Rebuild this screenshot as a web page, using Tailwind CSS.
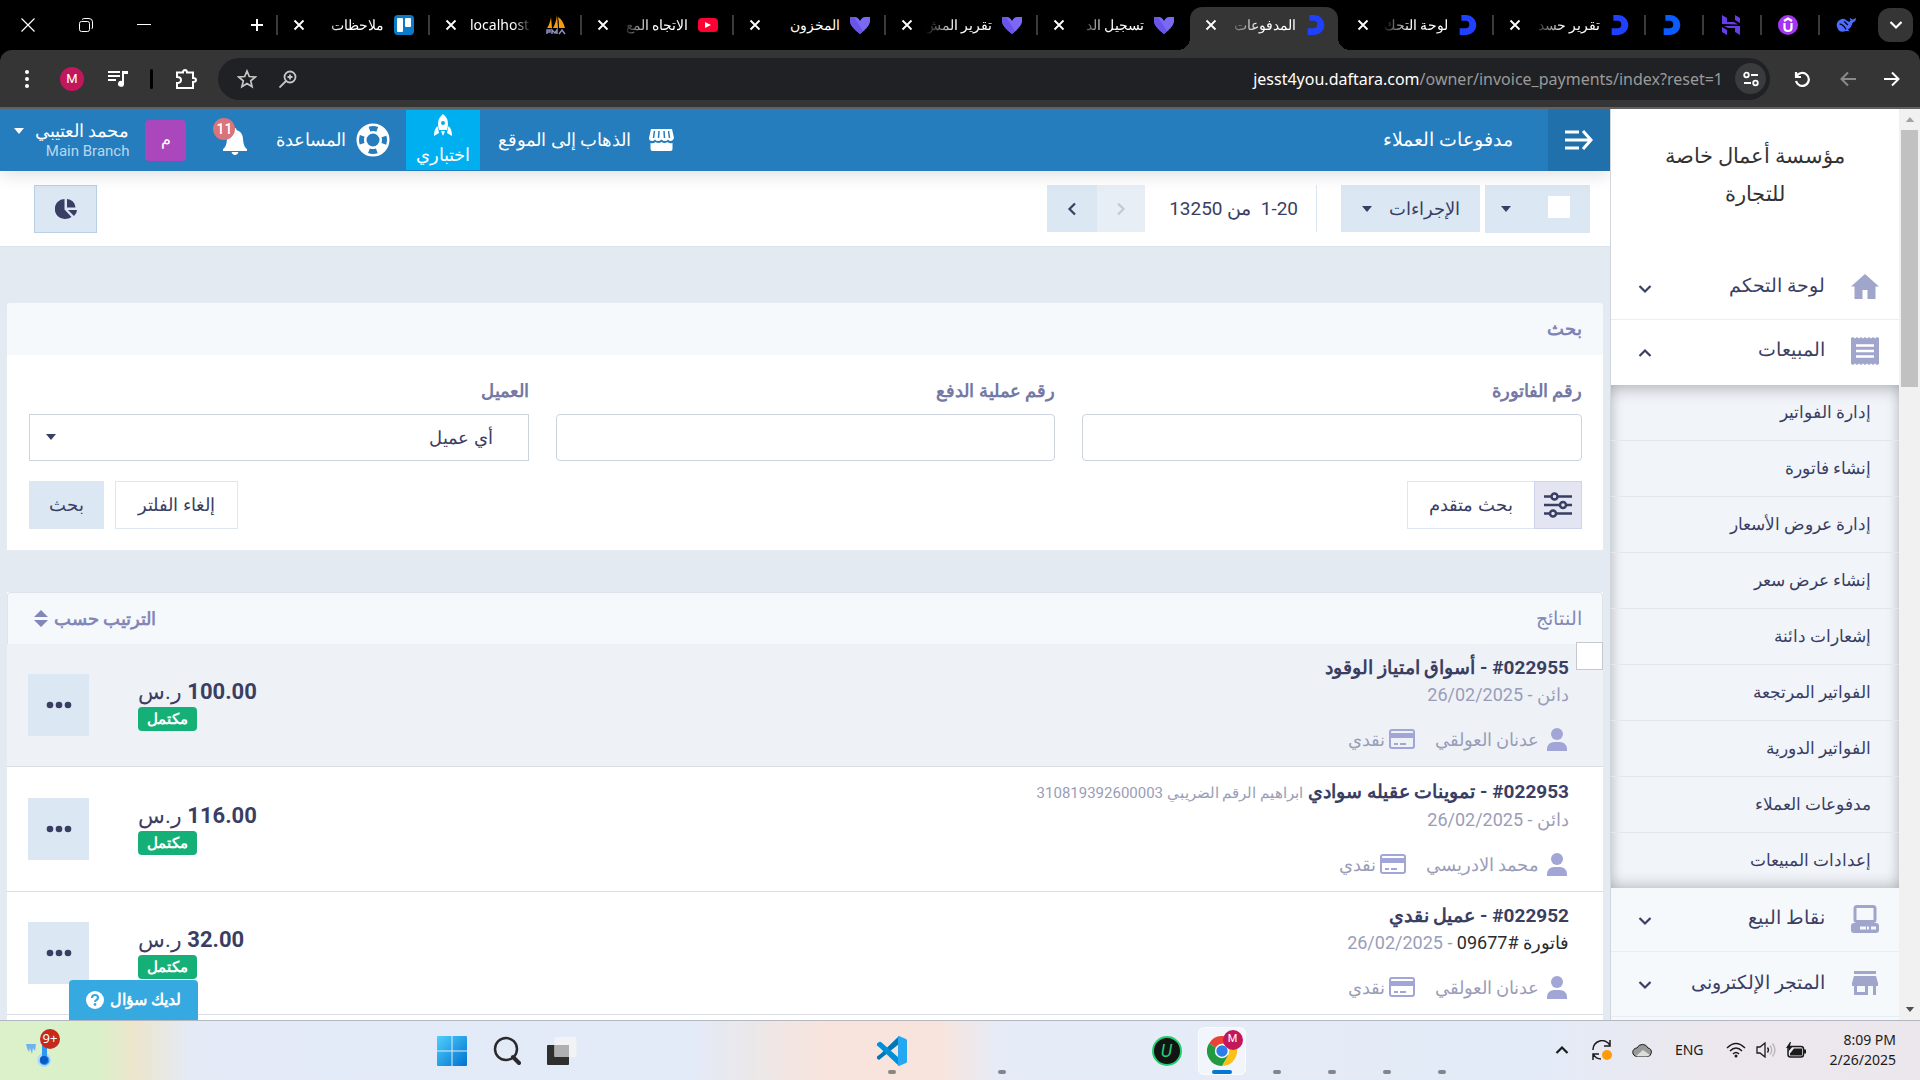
<!DOCTYPE html>
<html lang="ar" dir="rtl">
<head>
<meta charset="utf-8">
<meta name="viewport" content="width=device-width, initial-scale=1">
<title>مدفوعات العملاء</title>
<script src="https://cdn.jsdelivr.net/npm/@tailwindcss/browser@4"></script>
</head>
<body class="flex h-screen flex-col overflow-hidden bg-[#e3eaf2] font-[Roboto,'Noto_Sans',sans-serif] text-[#3a3e63]">

<!-- Shared icon shapes -->
<svg class="hidden" aria-hidden="true">
  <symbol id="x" viewBox="0 0 12 12"><path d="M1.5 1.5l9 9M10.5 1.5l-9 9" stroke="currentColor" stroke-width="1.8" fill="none"/></symbol>
  <symbol id="heart" viewBox="0 0 20 18"><path d="M0 1h5q3 0 5 4 2-4 5-4h5v5q-1 5-10 12Q1 11 0 6z" fill="#7b68f4"/><path d="M0 6Q1 11 10 18l3-3L4 1H0z" fill="#6a55ea"/></symbol>
  <symbol id="daf" viewBox="0 0 20 24"><path d="M2 0h6a12 12 0 0 1 0 24H0v-8h7a4.500 4.500 0 0 0 0-9H2z" fill="currentColor"/></symbol>
  <symbol id="caret" viewBox="0 0 10 6"><path d="M0 0h10L5 6z" fill="currentColor"/></symbol>
  <symbol id="chev" viewBox="0 0 14 10"><path d="M1.500 2L7 7.500 12.500 2" stroke="currentColor" stroke-width="2.200" fill="none"/></symbol>
  <symbol id="user" viewBox="0 0 20 23"><circle cx="10" cy="6" r="6" fill="currentColor"/><path d="M0 23v-2.500Q1 14 7 14h6q6 0 7 6.500V23z" fill="currentColor"/></symbol>
  <symbol id="card" viewBox="0 0 26 20"><rect x="1" y="1" width="24" height="18" rx="2" fill="none" stroke="currentColor" stroke-width="2"/><path d="M1 4h24v5H1zM5 14h4v2H5zM11 14h6v2h-6z" fill="currentColor"/></symbol>
  <symbol id="dots" viewBox="0 0 26 8"><g fill="currentColor"><circle cx="4" cy="4" r="3.300"/><circle cx="13" cy="4" r="3.300"/><circle cx="22" cy="4" r="3.300"/></g></symbol>
</svg>

<!-- Browser tab strip -->
<header class="flex h-[50px] shrink-0 items-center bg-black text-white">
  <button aria-label="البحث في علامات التبويب" class="mr-[7px] ml-[22px] flex h-[34px] w-[35px] items-center justify-center rounded-xl bg-[#353535]"><svg class="h-2.5 w-3.5"><use href="#chev"/></svg></button>
  <div class="flex w-[38px] items-center justify-between">
    <svg class="h-5 w-5" viewBox="0 0 22 20" fill="#4d6bfe"><path d="M1 8q2-5 8-5l4 3q2 1 3-1l-1-3 3 2q2 0 4-2 0 4-3 5l-1 1q-1 5-5 7l2 2-4-.5Q4 19 2 14 0 11 1 8z"/><path d="M4 9q4 0 7 6M9 6l4 4" stroke="#000" stroke-width="1.500" fill="none"/></svg>
    <span class="h-5 w-0.5 bg-[#3a3a3c]"></span>
  </div>
  <div class="flex w-[58px] items-center justify-between pr-5">
    <span class="flex h-5 w-5 items-center justify-center rounded-full bg-[#a435f0]"><svg class="h-4 w-3" viewBox="0 0 12 16" fill="none" stroke="#fff" stroke-width="2.200"><path d="M2 4l4-2.500L10 4M2.500 6v5q0 3 3.500 3t3.500-3V6"/></svg></span>
    <span class="h-5 w-0.5 bg-[#3a3a3c]"></span>
  </div>
  <div class="flex w-[58px] items-center justify-between pr-5">
    <svg class="h-5 w-[18px]" viewBox="0 0 18 20" fill="#673de6"><path d="M0 9V0l5 3v4h7l4 2.500zM13 0l5 3v5l-5-3zM18 11v9l-5-3v-4H6l-4-2zM0 12l5 3v5l-5-3z"/></svg>
    <span class="h-5 w-0.5 bg-[#3a3a3c]"></span>
  </div>
  <div class="flex w-[58px] items-center justify-between pr-5">
    <svg class="h-5 w-5 text-[#0a5cff]"><use href="#daf"/></svg>
    <span class="h-5 w-0.5 bg-[#3a3a3c]"></span>
  </div>
  <div class="flex w-[152px] shrink-0 items-center pr-3.5 text-sm">
    <svg class="h-5 w-5 shrink-0 text-[#2040ff]"><use href="#daf"/></svg>
    <span class="mr-2.5 w-[74px] overflow-hidden whitespace-nowrap leading-5 [mask-image:linear-gradient(to_left,#000_50%,transparent_90%)]">تقرير حسد</span>
    <button aria-label="إغلاق" class="mr-auto ml-[15px]"><svg class="h-3 w-3"><use href="#x"/></svg></button>
    <span class="h-5 w-0.5 bg-[#3a3a3c]"></span>
  </div>
  <div class="flex w-[152px] shrink-0 items-center pr-3.5 text-sm">
    <svg class="h-5 w-5 shrink-0 text-[#2040ff]"><use href="#daf"/></svg>
    <span class="mr-2.5 w-[74px] overflow-hidden whitespace-nowrap leading-5 [mask-image:linear-gradient(to_left,#000_50%,transparent_90%)]">لوحة التحك</span>
    <button aria-label="إغلاق" class="mr-auto ml-[17px]"><svg class="h-3 w-3"><use href="#x"/></svg></button>
  </div>
  <div class="relative mx-0.5 flex h-[43px] w-[148px] shrink-0 items-center self-end rounded-t-xl bg-[#353535] pr-3 pb-2 text-sm before:absolute before:bottom-0 before:-left-3 before:h-3 before:w-3 before:bg-[radial-gradient(circle_at_top_left,transparent_12px,#353535_12px)] after:absolute after:-right-3 after:bottom-0 after:h-3 after:w-3 after:bg-[radial-gradient(circle_at_top_right,transparent_12px,#353535_12px)]">
    <svg class="h-5 w-5 shrink-0 text-[#2040ff]"><use href="#daf"/></svg>
    <span class="mr-2.5 w-[74px] overflow-hidden whitespace-nowrap leading-5 [mask-image:linear-gradient(to_left,#000_50%,transparent_95%)]">المدفوعات</span>
    <button aria-label="إغلاق" class="mr-auto ml-[15px]"><svg class="h-3 w-3"><use href="#x"/></svg></button>
  </div>
  <div class="flex w-[152px] shrink-0 items-center pr-3.5 text-sm">
    <svg class="h-[18px] w-5 shrink-0"><use href="#heart"/></svg>
    <span class="mr-2.5 w-[74px] overflow-hidden whitespace-nowrap leading-5 [mask-image:linear-gradient(to_left,#000_50%,transparent_90%)]">تسجيل الد</span>
    <button aria-label="إغلاق" class="mr-auto ml-[15px]"><svg class="h-3 w-3"><use href="#x"/></svg></button>
    <span class="h-5 w-0.5 bg-[#3a3a3c]"></span>
  </div>
  <div class="flex w-[152px] shrink-0 items-center pr-3.5 text-sm">
    <svg class="h-[18px] w-5 shrink-0"><use href="#heart"/></svg>
    <span class="mr-2.5 w-[74px] overflow-hidden whitespace-nowrap leading-5 [mask-image:linear-gradient(to_left,#000_50%,transparent_90%)]">تقرير المش</span>
    <button aria-label="إغلاق" class="mr-auto ml-[15px]"><svg class="h-3 w-3"><use href="#x"/></svg></button>
    <span class="h-5 w-0.5 bg-[#3a3a3c]"></span>
  </div>
  <div class="flex w-[152px] shrink-0 items-center pr-3.5 text-sm">
    <svg class="h-[18px] w-5 shrink-0"><use href="#heart"/></svg>
    <span class="mr-2.5 w-[74px] overflow-hidden whitespace-nowrap leading-5">المخزون</span>
    <button aria-label="إغلاق" class="mr-auto ml-[15px]"><svg class="h-3 w-3"><use href="#x"/></svg></button>
    <span class="h-5 w-0.5 bg-[#3a3a3c]"></span>
  </div>
  <div class="flex w-[152px] shrink-0 items-center pr-3.5 text-sm">
    <span class="flex h-3.5 w-5 shrink-0 items-center justify-center rounded bg-[#ff0033]"><svg class="h-1.5 w-1.5" viewBox="0 0 6 6"><path d="M0 0l6 3-6 3z" fill="#fff"/></svg></span>
    <span class="mr-2.5 w-[74px] overflow-hidden whitespace-nowrap leading-5 [mask-image:linear-gradient(to_left,#000_50%,transparent_90%)]">الاتجاه المع</span>
    <button aria-label="إغلاق" class="mr-auto ml-[15px]"><svg class="h-3 w-3"><use href="#x"/></svg></button>
    <span class="h-5 w-0.5 bg-[#3a3a3c]"></span>
  </div>
  <div class="flex w-[152px] shrink-0 items-center pr-3.5 text-sm">
    <svg class="h-5 w-5 shrink-0" viewBox="0 0 20 20"><path d="M1 13Q4 9 5 2l1 11zM7 13Q10 8 11 0l1 13zM13 13q0-7-1-11 5 3 7 11z" fill="#f89c0e"/><path d="M1 19v-4h3v2H1M6 19v-4l3 3 2-3v4M13 19l3-4 3 4" stroke="#8a8cc0" stroke-width="1.500" fill="none"/></svg>
    <span dir="ltr" class="mr-3.5 w-[62px] overflow-hidden whitespace-nowrap font-['Noto_Sans'] leading-5 [mask-image:linear-gradient(to_right,#000_70%,transparent)]">localhost</span>
    <button aria-label="إغلاق" class="mr-auto ml-[15px]"><svg class="h-3 w-3"><use href="#x"/></svg></button>
    <span class="h-5 w-0.5 bg-[#3a3a3c]"></span>
  </div>
  <div class="flex w-[152px] shrink-0 items-center pr-3.5 text-sm">
    <span class="flex h-5 w-5 shrink-0 items-start justify-center gap-0.5 rounded bg-[#0a7bc8] pt-[3px]"><span class="h-[9px] w-1.5 rounded-[1px] bg-white"></span><span class="h-3.5 w-1.5 rounded-[1px] bg-white"></span></span>
    <span class="mr-2.5 w-[74px] overflow-hidden whitespace-nowrap leading-5 [mask-image:linear-gradient(to_left,#000_60%,transparent)]">ملاحظات</span>
    <button aria-label="إغلاق" class="mr-auto ml-[15px]"><svg class="h-3 w-3"><use href="#x"/></svg></button>
    <span class="h-5 w-0.5 bg-[#3a3a3c]"></span>
  </div>
  <button aria-label="علامة تبويب جديدة" class="mr-3"><svg class="h-3.5 w-3.5" viewBox="0 0 14 14"><path d="M7 1v12M1 7h12" stroke="#fff" stroke-width="2"/></svg></button>
  <div class="mr-auto ml-[21px] flex items-center gap-11">
    <button aria-label="تصغير"><svg class="h-3.5 w-3.5" viewBox="0 0 14 14"><path d="M0 6.500h14" stroke="#fff"/></svg></button>
    <button aria-label="استعادة"><svg class="h-3.5 w-3.5" viewBox="0 0 14 14" fill="none" stroke="#fff"><rect x=".5" y="3.500" width="10" height="10" rx="2"/><path d="M3 1.500Q4 .5 6 .5h4q3.500 0 3.500 3.500v5q0 1.500-1 2"/></svg></button>
    <button aria-label="إغلاق النافذة"><svg class="h-3.5 w-3.5" viewBox="0 0 14 14"><path d="M.5.5l13 13M13.500.5l-13 13" stroke="#fff" stroke-width="1.200"/></svg></button>
  </div>
</header>

<!-- Browser toolbar -->
<div class="shrink-0 bg-black">
<div class="flex h-[59px] items-center rounded-t-xl border-b-2 border-[#616161] bg-[#353535] pr-5 pl-[22px] text-white">
  <button aria-label="للأمام"><svg class="h-4 w-4" viewBox="0 0 16 16" fill="none" stroke="currentColor" stroke-width="2"><path d="M0 8h14M8 1.500L14.500 8 8 14.500"/></svg></button>
  <button aria-label="رجوع" class="mr-7 text-[#8a8a8a]"><svg class="h-4 w-4" viewBox="0 0 16 16" fill="none" stroke="currentColor" stroke-width="2"><path d="M16 8H2M8 1.500L1.500 8 8 14.500"/></svg></button>
  <button aria-label="إعادة التحميل" class="mr-[30px]"><svg class="h-4 w-4" viewBox="0 0 16 16" fill="none" stroke="currentColor" stroke-width="2.200"><path d="M2 1v5h5M2.500 5.500A6.500 6.500 0 1 1 2 10"/></svg></button>
  <div class="mr-6 flex h-[42px] flex-1 items-center rounded-full bg-[#202124] pr-1 pl-[19px] text-[#c7c7c7]">
    <span class="flex h-[31px] w-[31px] items-center justify-center rounded-full bg-[#3a3b3d]"><svg class="h-4 w-4 text-white" viewBox="0 0 16 16" fill="none" stroke="currentColor" stroke-width="1.800"><circle cx="3.500" cy="4" r="2.300"/><path d="M8 4h7M1 12h7"/><circle cx="12.500" cy="12" r="2.300"/></svg></span>
    <div dir="ltr" class="mr-3 flex-1 text-right font-['Noto_Sans'] text-base leading-6 text-[#9a9a9a]"><span class="text-white">jesst4you.daftara.com</span>/owner/invoice_payments/index?reset=1</div>
    <button aria-label="تكبير"><svg class="h-[18px] w-[18px]" viewBox="0 0 18 18" fill="none" stroke="currentColor" stroke-width="1.800"><circle cx="11" cy="7" r="5.500"/><path d="M7 11l-6.500 6.500M8.500 7h5M11 4.500v5"/></svg></button>
    <button aria-label="إضافة إشارة" class="mr-[22px]"><svg class="h-5 w-5" viewBox="0 0 20 20" fill="none" stroke="currentColor" stroke-width="1.700"><path d="M10 2l2.300 5.500 6 .5-4.600 3.900 1.400 5.900L10 14.600l-5.100 3.200 1.400-5.900L1.700 8l6-.5z"/></svg></button>
  </div>
  <button aria-label="الإضافات" class="mr-[21px]"><svg class="h-[22px] w-[22px]" viewBox="0 0 22 22" fill="none" stroke="currentColor" stroke-width="2"><path d="M2 4.500h6Q8 2 10 2t2 2.500h6V10q3 0 3 2t-3 2v6H2v-5q4 0 4-3T2 9z"/></svg></button>
  <span class="mr-[22px] h-5 w-[3px] rounded bg-black"></span>
  <button aria-label="التحكم في الوسائط" class="mr-[22px]"><svg class="h-4 w-5" viewBox="0 0 20 16" fill="currentColor"><path d="M0 0h12v2H0zM0 4h12v2H0zM0 8h8v2H0zM14 0h6v3h-4v10a3 3 0 1 1-2-3z"/></svg></button>
  <button aria-label="الملف الشخصي" class="mr-6 flex h-6 w-6 items-center justify-center rounded-full bg-[#c2185b] text-[13px]">M</button>
  <button aria-label="القائمة" class="mr-7"><svg class="h-5 w-2.5" viewBox="0 0 10 20" fill="currentColor"><circle cx="5" cy="3" r="2"/><circle cx="5" cy="10" r="2"/><circle cx="5" cy="17" r="2"/></svg></button>
</div>
</div>

<div class="relative flex min-h-0 flex-1">
  <!-- Page scrollbar -->
  <div class="flex w-[21px] shrink-0 flex-col items-center bg-[#f1f1f1]" aria-hidden="true">
    <svg class="my-2 h-[5px] w-2.5 shrink-0 rotate-180 text-[#a3a3a3]"><use href="#caret"/></svg>
    <div class="h-[257px] w-[17px] shrink-0 bg-[#c1c1c1]"></div>
    <svg class="mt-auto mb-2 h-[5px] w-2.5 shrink-0 text-[#505050]"><use href="#caret"/></svg>
  </div>

  <!-- Sidebar -->
  <aside class="w-[289px] shrink-0 overflow-hidden border-l border-[#d3d6da] bg-[#f5f9fc]">
    <div class="h-[147px] bg-white px-10 pt-7 text-center text-[21px] leading-[38px] text-[#333]">مؤسسة أعمال خاصة للتجارة</div>
    <nav class="font-medium">
      <a href="#" class="flex h-[64px] items-center border-b border-[#ebeef2] bg-white pr-5 pb-0.5 pl-[27px] text-[19px]">
        <svg class="h-[26px] w-7 text-[#a0a5cc]" viewBox="0 0 28 26" fill="currentColor"><path d="M14 0l14 12.500h-3.500V25h-8v-9h-5v9h-8V12.500H0z"/></svg>
        <span class="mr-[26px]">لوحة التحكم</span><svg class="mt-1 mr-auto h-2.5 w-3.5"><use href="#chev"/></svg>
      </a>
      <a href="#" class="relative z-10 flex h-[65px] items-center bg-white pr-5 pb-1 pl-[27px] text-[19px]">
        <svg class="h-7 w-7 text-[#a0a5cc]" viewBox="0 0 28 28"><path d="M0 1l2-1 2 1.500L6 0l2 1.500L10 0l2 1.500L14 0l2 1.500L18 0l2 1.500L22 0l2 1.500L26 0l2 1v26l-2 1-2-1.500-2 1.500-2-1.500-2 1.500-2-1.500-2 1.500-2-1.500-2 1.500-2-1.500-2 1.500-2-1.500L2 28l-2-1z" fill="currentColor"/><path d="M5 8.500h18M5 14h18M5 19.500h18" stroke="#fff" stroke-width="2.500"/></svg>
        <span class="mr-[26px]">المبيعات</span><svg class="mt-1 mr-auto h-2.5 w-3.5 rotate-180"><use href="#chev"/></svg>
      </a>
      <div class="divide-y divide-[#e2e7ee] bg-[#f1f5fa] text-[17px] shadow-[inset_0_8px_16px_-4px_rgba(0,0,0,0.22),inset_0_-8px_16px_-6px_rgba(0,0,0,0.18),inset_0_0_16px_rgba(0,0,0,0.08)]">
        <a href="#" class="flex h-14 items-center pr-7">إدارة الفواتير</a>
        <a href="#" class="flex h-14 items-center pr-7">إنشاء فاتورة</a>
        <a href="#" class="flex h-14 items-center pr-7">إدارة عروض الأسعار</a>
        <a href="#" class="flex h-14 items-center pr-7">إنشاء عرض سعر</a>
        <a href="#" class="flex h-14 items-center pr-7">إشعارات دائنة</a>
        <a href="#" class="flex h-14 items-center pr-7">الفواتير المرتجعة</a>
        <a href="#" class="flex h-14 items-center pr-7">الفواتير الدورية</a>
        <a href="#" class="flex h-14 items-center pr-7">مدفوعات العملاء</a>
        <a href="#" class="flex h-[55px] items-center pr-7">إعدادات المبيعات</a>
      </div>
      <a href="#" class="flex h-[64px] items-center border-b border-[#e8edf3] pr-5 pb-0.5 pl-[27px] text-[19px]">
        <svg class="h-7 w-7 text-[#a0a5cc]" viewBox="0 0 28 28"><rect x="4" y="1.500" width="20" height="15" rx="2" fill="none" stroke="currentColor" stroke-width="3"/><rect y="18" width="28" height="10" rx="3" fill="currentColor"/><path d="M9 21.500h6v3H9zM16 21.500h2v3h-2zM20 21.500h5v3h-5z" fill="#f5f9fc"/></svg>
        <span class="mr-[26px]">نقاط البيع</span><svg class="mt-1 mr-auto h-2.5 w-3.5"><use href="#chev"/></svg>
      </a>
      <a href="#" class="flex h-[65px] items-center border-b border-[#e8edf3] pr-5 pb-0.5 pl-[27px] text-[19px]">
        <svg class="mx-px h-6 w-[26px] text-[#a0a5cc]" viewBox="0 0 26 24" fill="currentColor"><path d="M2 0h22v3H2zM2 5h22l2 7v3h-2v9h-3v-9h-5v9H2v-9H0v-3zm3 10v6h8v-6z" fill-rule="evenodd"/></svg>
        <span class="mr-[26px]">المتجر الإلكترونى</span><svg class="mt-1 mr-auto h-2.5 w-3.5"><use href="#chev"/></svg>
      </a>
    </nav>
  </aside>

  <div class="flex min-w-0 flex-1 flex-col overflow-hidden">
    <!-- App bar -->
    <div class="relative z-10 flex h-[62px] shrink-0 items-center bg-[#257dbe] text-white shadow-[0_2px_20px_rgba(0,0,0,0.15)]">
      <button aria-label="طي القائمة" class="flex h-full w-[62px] items-center justify-center bg-[#2070ab]"><svg class="h-[22px] w-7" viewBox="0 0 28 22" fill="none" stroke="currentColor" stroke-width="3"><path d="M0 3h14M0 11h25M0 19h14M18 2l8 9-8 9"/></svg></button>
      <h1 class="mr-[35px] text-[19px] font-medium">مدفوعات العملاء</h1>
      <a href="#" class="mr-auto flex items-center gap-[18px] text-lg">
        <svg class="h-[22px] w-[25px]" viewBox="0 0 25 22"><path d="M2 0h21l2 9q-1 3-3 3-2 0-3-1.500Q18 12 16 12t-3.500-1.500Q11 12 9 12t-3-1.500Q5 12 3 12q-3 0-3-3zM1.500 14q3 1 5-1 3 2 6 0 3 2 6 0 2 2 5 1v6q0 2-2 2h-18q-2 0-2-2z" fill="#fff"/><path d="M5.500 2L4.500 9M10 2l-.5 7M15 2l.5 7M19.500 2l1 7" stroke="#257dbe" stroke-width="1.500"/></svg>
        الذهاب إلى الموقع</a>
      <a href="#" class="mr-[18px] flex h-[60px] w-[74px] flex-col items-center bg-[#00aff0] pt-1 text-lg font-medium leading-[38px]"><svg class="h-[22px] w-[18px] shrink-0" viewBox="0 0 18 22"><path d="M9 0q5 4 5 10 0 3-1 6H5q-1-3-1-6 0-6 5-10zM3.500 12l1.500 7-5 3q0-7 3.500-10zM14.500 12L13 19l5 3q0-7-3.500-10zM7 17h4l-2 5z" fill="#fff"/><circle cx="9" cy="9" r="2" fill="#00aff0"/></svg>اختباري</a>
      <a href="#" class="mr-4 flex items-center gap-2.5 text-lg"><svg class="h-[34px] w-[34px]" viewBox="0 0 34 34" fill="none"><circle cx="17" cy="17" r="11.500" stroke="#fff" stroke-width="10"/><circle cx="17" cy="17" r="11.500" stroke="#257dbe" stroke-width="5" stroke-dasharray="8 10.060" stroke-dashoffset="4"/></svg>المساعدة</a>
      <button aria-label="الإشعارات" class="relative mr-[29px] flex"><svg class="h-8 w-6" viewBox="0 0 24 32" fill="#fff"><path d="M12 4q1.500 0 1.500 2 6 1.500 6.500 9 .5 8 4 10v2H0v-2q3.500-2 4-10 .5-7.500 6.500-9Q10.500 4 12 4zM8.500 28h7q-1 3-3.500 3t-3.500-3z"/></svg><span class="absolute -top-1.5 -left-2.5 flex h-[22px] w-[22px] items-center justify-center rounded-full bg-[#d9747b] text-sm font-medium">11</span></button>
      <span class="mr-[37px] flex h-[41px] w-[41px] items-center justify-center rounded bg-[#ab47bc] text-base">م</span>
      <button class="mr-4 ml-3.5 flex gap-[11px] text-right"><span class="flex flex-col"><span class="text-lg leading-[22px]">محمد العتيبي</span><span class="text-[15px] leading-[18px] text-[#b9d7ec]">Main Branch</span></span><svg class="mt-2 h-1.5 w-2.5"><use href="#caret"/></svg></button>
    </div>

    <!-- Actions bar -->
    <div class="flex h-[76px] shrink-0 items-center border-b border-[#dbe3ec] bg-white pr-5 pl-[34px] text-lg">
      <div class="flex h-12 w-[105px] items-center bg-[#dbe7f2] pr-5 pl-4"><input type="checkbox" aria-label="تحديد الكل" class="mb-1 h-[22px] w-[22px] appearance-none bg-white"><button aria-label="خيارات التحديد" class="mr-auto"><svg class="h-1.5 w-2.5"><use href="#caret"/></svg></button></div>
      <button class="mr-[5px] flex h-[47px] w-[139px] items-center bg-[#dbe7f2] pr-5 font-medium">الإجراءات<svg class="mr-auto ml-[21px] h-1.5 w-2.5"><use href="#caret"/></svg></button>
      <span class="mr-6 h-[47px] w-px bg-[#dbe7f2]"></span>
      <span class="mr-[18px] w-[149px] text-[19px]">1-20&nbsp; من 13250</span>
      <button aria-label="السابق" disabled class="mr-1 flex h-[47px] w-[48px] items-center justify-center bg-[#e8eef6] text-[#c5c9d0]"><svg class="h-2.5 w-3.5 -rotate-90"><use href="#chev"/></svg></button>
      <button aria-label="التالي" class="flex h-[47px] w-[50px] items-center justify-center bg-[#dbe7f2]"><svg class="h-2.5 w-3.5 rotate-90"><use href="#chev"/></svg></button>
      <button aria-label="التقارير" class="mr-auto flex h-12 w-[63px] items-center justify-center border border-[#b9cfe6] bg-[#dbe7f2]"><svg class="h-5 w-[22px]" viewBox="0 0 22 20" fill="currentColor"><path d="M9.500 0v10.500l7 7.500Q14 20 10 20A10 10 0 0 1 9.500 0zM12 0a9 9 0 0 1 8.500 8.500H12zM13 11h9q0 3-3 6z"/></svg></button>
    </div>

    <main class="min-h-0 flex-1 overflow-hidden px-[7px] pt-14">
      <!-- Search panel -->
      <form class="overflow-hidden rounded-t bg-white" onsubmit="return false">
        <h2 class="flex h-[52px] items-center bg-[#f5f9fc] pr-[21px] text-lg font-bold text-[#7f83b5]">بحث</h2>
        <div class="grid grid-cols-3 gap-x-[27px] pt-5 pr-[21px] pl-[22px] text-lg">
          <div><label for="inv" class="block h-[39px] leading-8 font-bold text-[#7479a5]">رقم الفاتورة</label><input id="inv" type="text" class="block h-[47px] w-full rounded-sm border border-[#cdd3dc] bg-white px-4"></div>
          <div><label for="pay" class="block h-[39px] leading-8 font-bold text-[#7479a5]">رقم عملية الدفع</label><input id="pay" type="text" class="block h-[47px] w-full rounded-sm border border-[#cdd3dc] bg-white px-4"></div>
          <div><label for="cust" class="block h-[39px] leading-8 font-bold text-[#7479a5]">العميل</label>
            <div class="relative"><select id="cust" class="block h-[47px] w-full appearance-none border border-[#cdd3dc] bg-white pr-[35px] pl-10"><option>أي عميل</option></select><svg class="pointer-events-none absolute top-5 left-[17px] h-1.5 w-2.5"><use href="#caret"/></svg></div></div>
        </div>
        <div class="flex h-[89px] items-start pt-5 pr-[21px] pl-[22px] text-lg">
          <button class="flex h-12 w-[175px] items-center border border-[#dbe7f2]"><span class="-my-px -mr-px flex h-12 w-12 items-center justify-center border border-[#ccd5ea] bg-[#e3e6f2]"><svg class="h-[26px] w-7" viewBox="0 0 28 26" fill="#e3e6f2" stroke="#3a3e63" stroke-width="2.500"><path d="M0 4.500h28M0 13h28M0 21.500h28"/><circle cx="10.500" cy="4.500" r="3"/><circle cx="19" cy="13" r="3"/><circle cx="9" cy="21.500" r="3"/></svg></span><span class="flex-1 text-center">بحث متقدم</span></button>
          <button class="mr-auto h-12 w-[123px] border border-[#dbe7f2]">إلغاء الفلتر</button>
          <button class="mr-[11px] h-12 w-[75px] bg-[#dbe7f2]">بحث</button>
        </div>
      </form>

      <!-- Results -->
      <section class="mt-[42px] bg-white">
        <div class="flex h-[52px] items-center justify-between rounded-t border border-b-0 border-[#dde3ea] bg-[#f5f9fc] pr-5 pl-[26px] text-lg text-[#8387b8]"><h2 class="text-[19px]">النتائج</h2><button class="flex items-center gap-1.5 font-bold">الترتيب حسب<svg class="h-[17px] w-3.5" viewBox="0 0 14 17" fill="currentColor"><path d="M7 0l7 7H0zM7 17l7-7H0z"/></svg></button></div>
        <article class="relative flex h-[123px] border-b border-[#dadee3] bg-[#eef2f7] pr-[34px] pl-[21px]">
          <input type="checkbox" aria-label="تحديد الدفعة" class="absolute -top-0.5 right-0 h-7 w-[27px] appearance-none border border-[#c5c8cd] bg-white">
          <div class="flex-1 pt-[9px] text-[#9a9db8]"><h3 class="text-[19px] leading-[30px] font-bold text-[#3a3e63]">#022955 - أسواق امتياز الوقود</h3><p class="text-lg leading-6">دائن - 26/02/2025</p>
            <div class="mt-[15px] flex items-center text-lg leading-8"><svg class="mr-0.5 h-[23px] w-5 text-[#a1a6d6]"><use href="#user"/></svg><span class="mr-2 pt-0.5">عدنان العولقي</span><svg class="mr-5 h-5 w-[26px] text-[#a1a6d6]"><use href="#card"/></svg><span class="mr-1 pt-0.5">نقدي</span></div></div>
          <div class="flex w-[116px] flex-col items-end pt-8"><strong class="text-[22px] leading-[31px] font-normal whitespace-nowrap"><span class="font-bold">100.00</span> ر.س</strong><span class="flex h-6 w-[59px] items-center justify-center rounded bg-[#15b077] text-[15px] font-bold text-white">مكتمل</span></div>
          <button aria-label="خيارات" class="mt-[30px] mr-[49px] flex h-[62px] w-[61px] items-center justify-center bg-[#dbe7f2]"><svg class="h-2 w-[26px]"><use href="#dots"/></svg></button>
        </article>
        <article class="relative flex h-[125px] border-b border-[#dadee3] pt-px pr-[34px] pl-[21px]">
          <div class="flex-1 pt-[9px] text-[#9a9db8]"><h3 class="text-[19px] leading-[30px] font-bold text-[#3a3e63]">#022953 - تموينات عقيله سوادي <span class="text-[15px] font-normal text-[#9a9db8]">ابراهيم الرقم الضريبي 310819392600003</span></h3><p class="text-lg leading-6">دائن - 26/02/2025</p>
            <div class="mt-[15px] flex items-center text-lg leading-8"><svg class="mr-0.5 h-[23px] w-5 text-[#a1a6d6]"><use href="#user"/></svg><span class="mr-2 pt-0.5">محمد الادريسي</span><svg class="mr-5 h-5 w-[26px] text-[#a1a6d6]"><use href="#card"/></svg><span class="mr-1 pt-0.5">نقدي</span></div></div>
          <div class="flex w-[116px] flex-col items-end pt-8"><strong class="text-[22px] leading-[31px] font-normal whitespace-nowrap"><span class="font-bold">116.00</span> ر.س</strong><span class="flex h-6 w-[59px] items-center justify-center rounded bg-[#15b077] text-[15px] font-bold text-white">مكتمل</span></div>
          <button aria-label="خيارات" class="mt-[30px] mr-[49px] flex h-[62px] w-[61px] items-center justify-center bg-[#dbe7f2]"><svg class="h-2 w-[26px]"><use href="#dots"/></svg></button>
        </article>
        <article class="relative flex h-[123px] border-b border-[#dadee3] pr-[34px] pl-[21px]">
          <div class="flex-1 pt-[9px] text-[#9a9db8]"><h3 class="text-[19px] leading-[30px] font-bold text-[#3a3e63]">#022952 - عميل نقدي</h3><p class="text-lg leading-6"><a href="#" class="text-[#2b2b2b]">فاتورة #09677</a> - 26/02/2025</p>
            <div class="mt-[15px] flex items-center text-lg leading-8"><svg class="mr-0.5 h-[23px] w-5 text-[#a1a6d6]"><use href="#user"/></svg><span class="mr-2 pt-0.5">عدنان العولقي</span><svg class="mr-5 h-5 w-[26px] text-[#a1a6d6]"><use href="#card"/></svg><span class="mr-1 pt-0.5">نقدي</span></div></div>
          <div class="flex w-[116px] flex-col items-end pt-8"><strong class="text-[22px] leading-[31px] font-normal whitespace-nowrap"><span class="font-bold">32.00</span> ر.س</strong><span class="flex h-6 w-[59px] items-center justify-center rounded bg-[#15b077] text-[15px] font-bold text-white">مكتمل</span></div>
          <button aria-label="خيارات" class="mt-[30px] mr-[49px] flex h-[62px] w-[61px] items-center justify-center bg-[#dbe7f2]"><svg class="h-2 w-[26px]"><use href="#dots"/></svg></button>
        </article>
        <div class="h-10"></div>
      </section>
    </main>
  </div>

  <button class="absolute bottom-0 left-[69px] z-20 flex h-10 w-[129px] items-center justify-center gap-1.5 rounded-t bg-[#37a9e1] text-base font-bold text-white">لديك سؤال<svg class="h-[18px] w-[18px]" viewBox="0 0 18 18"><circle cx="9" cy="9" r="9" fill="#fff"/><path d="M6 7q0-3 3-3t3 2.500Q12 8 10.500 9 9 9.500 9 11" stroke="#37a9e1" stroke-width="2.200" fill="none"/><circle cx="9" cy="13.500" r="1.400" fill="#37a9e1"/></svg></button>
</div>

<!-- Windows taskbar -->
<footer dir="ltr" class="flex h-[60px] shrink-0 items-center border-t border-[#b3b7bf] bg-[linear-gradient(90deg,#dcf1c9_0%,#d9f0c8_5%,#ece5cd_7%,#e4ebf7_10%,#e3eaf8_36%,#ebe8ea_39%,#f8e4dd_43%,#f8e4dd_49%,#e6ebf7_52%,#e3ebf8_80%,#ebe8ee_88%,#ece7ec_100%)] text-[#1b1b1b]">
  <div class="flex-1 pb-0.5 pl-[26px]">
    <div class="relative h-[42px] w-9"><svg class="h-[42px] w-9" viewBox="0 0 36 42"><path d="M0 15h10l-1 7-2-3-1 6-2-6-1 4-2-4z" fill="#6fb2ef"/><circle cx="18" cy="31" r="7" fill="#b9dcf8"/><path d="M16 15h5v12a5 5 0 1 1-5 0z" fill="#2c9af0"/><circle cx="18" cy="31" r="4" fill="#0a5bc4"/></svg><span class="absolute top-0 left-3.5 flex h-5 w-5 items-center justify-center rounded-full bg-[#c42b1c] font-['Noto_Sans'] text-[13px] leading-none text-white">9+</span></div>
  </div>
  <div class="grid h-full shrink-0 grid-cols-[repeat(19,55px)] items-center justify-items-center">
    <button aria-label="ابدأ"><svg class="h-[30px] w-[30px]" viewBox="0 0 30 30"><defs><linearGradient id="w" x1="0" y1="0" x2="1" y2="1"><stop offset="0" stop-color="#4fd0fc"/><stop offset="1" stop-color="#0070d0"/></linearGradient></defs><path d="M0 1q0-1 1-1h13.500v14.500H0zM15.500 0H29q1 0 1 1v13.500H15.500zM0 15.500h14.500V30H1q-1 0-1-1zM15.500 15.500H30V29q0 1-1 1H15.500z" fill="url(#w)"/></svg></button>
    <button aria-label="بحث"><svg class="h-[30px] w-7" viewBox="0 0 28 30" fill="none" stroke="#2a2a2a" stroke-width="2.500"><circle cx="13" cy="13" r="11"/><path d="M20 21l6 6" stroke-width="4" stroke-linecap="round"/></svg></button>
    <button aria-label="عرض المهام"><svg class="h-7 w-[30px]" viewBox="0 0 30 28"><rect y="8" width="22" height="20" rx="1" fill="#2f2f2d"/><rect x="7.500" width="22" height="20" rx="1" fill="#f4f4f4" fill-opacity=".88"/><path d="M7.500 8H22v12H7.500z" fill="#b0b0b0"/></svg></button>
    <button aria-label="Visual Studio Code" class="relative col-start-9 flex h-full items-center"><svg class="h-[30px] w-[30px]" viewBox="0 0 30 30"><path d="M22 0l-18 17.500L0 20.500q-.5 1 0 2l2 1.500L22 8z" fill="#0078b8"/><path d="M22 30L3 12 0 9.500q-.5-1 0-2L2 6q1-.5 2 0l18 16z" fill="#0090d8"/><path d="M22 0l7 3q1 .5 1 1.500v21q0 1-1 1.500l-7 3q-1 0-1-1V1q0-1 1-1z" fill="#24a8f2"/></svg><span class="absolute bottom-1.5 left-1/2 -ml-1 h-1 w-2 rounded-full bg-[#8a8583]"></span></button>
    <span class="col-start-11 mb-1.5 h-1 w-2 self-end rounded-full bg-[#80868e]"></span>
    <button aria-label="IObit Uninstaller" class="col-start-14 flex h-[30px] w-[30px] items-center justify-center rounded-full border-2 border-[#20d070] bg-[#141414] text-lg text-[#20d070] italic">U</button>
    <button aria-label="Google Chrome" class="relative flex h-12 w-12 items-center justify-center rounded-md border border-white/60 bg-white/50"><svg class="h-[30px] w-[30px]" viewBox="0 0 30 30"><path d="M15 15L2 7.500A15 15 0 0 1 28 7.500z" fill="#ea4335"/><path d="M15 15L2 7.500A15 15 0 0 0 15 30l7-11z" fill="#229a42"/><path d="M15 7.500h13A15 15 0 0 1 15 30l6.500-11.500z" fill="#fbc116"/><circle cx="15" cy="15" r="7.200" fill="#fff"/><circle cx="15" cy="15" r="5.700" fill="#2b7de9"/></svg><span class="absolute top-0.5 right-0.5 flex h-5 w-5 items-center justify-center rounded-full bg-[#c2185b] text-[11px] text-white">M</span><span class="absolute bottom-0 h-1 w-5 rounded-full bg-[#0078d4]"></span></button>
    <span class="mb-1.5 h-1 w-2 self-end rounded-full bg-[#80868e]"></span>
    <span class="mb-1.5 h-1 w-2 self-end rounded-full bg-[#80868e]"></span>
    <span class="mb-1.5 h-1 w-2 self-end rounded-full bg-[#80868e]"></span>
    <span class="mb-1.5 h-1 w-2 self-end rounded-full bg-[#80868e]"></span>
  </div>
  <div class="flex w-[451px] shrink-0 items-center justify-end pr-6 pb-0.5 font-['Noto_Sans']">
    <button aria-label="إظهار الأيقونات المخفية"><svg class="h-2.5 w-3.5 rotate-180"><use href="#chev"/></svg></button>
    <svg class="ml-[23px] h-5 w-5" viewBox="0 0 20 20" fill="none" stroke="currentColor" stroke-width="1.500"><path d="M1 10A9 9 0 0 1 18 5.500M18 0v6h-6M1 20v-6h6M1.500 14.500Q4 19 9 19"/><circle cx="15" cy="15" r="5" fill="#ff9a0a" stroke="none"/></svg>
    <svg class="ml-5 h-3.5 w-5" viewBox="0 0 20 14" stroke="currentColor"><path d="M5 13.500a4 4 0 0 1 0-8.500A6 6 0 0 1 16 5a4.300 4.300 0 0 1-1 8.500z" fill="#999"/><path d="M4 13l7-6 7 5-3 1.500H5z" fill="#ddd" stroke="none"/></svg>
    <span class="ml-[23px] text-sm">ENG</span>
    <svg class="ml-[22px] h-4 w-5" viewBox="0 0 20 16" fill="none" stroke="currentColor" stroke-width="1.500"><path d="M1 6Q10-3 19 6M4 9q6-6 12 0M7 12q3-3 6 0"/><circle cx="10" cy="14" r="1.500" fill="currentColor" stroke="none"/></svg>
    <svg class="ml-2.5 h-4 w-5" viewBox="0 0 20 16" fill="none" stroke="currentColor" stroke-width="1.300"><path d="M1 5h3l5-4v14l-5-4H1z"/><path d="M11.500 5.500q2 2.500 0 5"/><path d="M14 3.500q3.500 4.500 0 9M16.500 1.500q5 6.500 0 13" stroke="#b5b5b5"/></svg>
    <svg class="ml-2.5 h-4 w-5" viewBox="0 0 20 16"><rect x="2" y="4.500" width="15.500" height="10.500" rx="2.500" fill="none" stroke="currentColor" stroke-width="1.500"/><path d="M8 6.500h8v7H4v-2zM18 7.500h2v4h-2zM4 0L0 6h3l-1 4 5-6H4l1-4z" fill="currentColor"/></svg>
    <time class="ml-6 text-right text-sm leading-5 whitespace-nowrap">8:09 PM<br>2/26/2025</time>
  </div>
</footer>
</body>
</html>
